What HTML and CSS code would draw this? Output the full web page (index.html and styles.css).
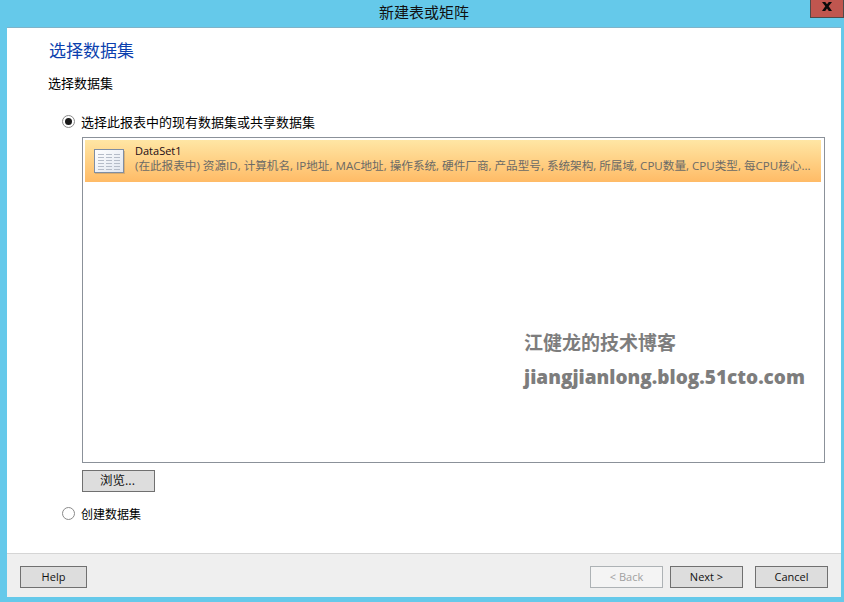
FILE: index.html
```html
<!DOCTYPE html>
<html lang="zh-CN">
<head>
<meta charset="utf-8">
<title>新建表或矩阵</title>
<link rel="stylesheet" href="styles.css">
</head>
<body>
<div class="window">
  <header class="titlebar">
    <span class="title">新建表或矩阵</span>
    <button class="close" type="button" aria-label="关闭">
      <svg width="12" height="9" viewBox="0 0 12 9"><path d="M1 0H4.2L6 2.2 7.8 0H11L7.7 4.2 11 9H7.8L6 6.4 4.2 9H1L4.3 4.2Z" fill="#0b0b0b"/></svg>
    </button>
  </header>
  <div class="client">
    <main class="content">
      <h1 class="heading">选择数据集</h1>
      <p class="subheading">选择数据集</p>
      <label class="option option-first"><span class="radio checked"></span>选择此报表中的现有数据集或共享数据集</label>
      <div class="indent">
        <div class="listbox">
          <div class="item">
            <svg class="item-icon" width="32" height="26" viewBox="0 0 32 26">
              <defs><linearGradient id="sheet" x1="0" y1="0" x2="1" y2="1"><stop offset="0" stop-color="#ffffff"/><stop offset="1" stop-color="#dfe5ef"/></linearGradient></defs>
              <rect x="2" y="3" width="30" height="23" fill="#b9976a" opacity=".55"/>
              <rect x="1.5" y="1.5" width="29" height="23" fill="url(#sheet)" stroke="#7f8ea3"/>
              <path d="M5 6.5h6m2 0h6m2 0h6M5 9.5h6m2 0h6m2 0h6M5 12.5h6m2 0h6m2 0h6M5 15.5h6m2 0h6m2 0h6M5 18.5h6m2 0h6m2 0h6M5 21.5h6m2 0h6m2 0h6" stroke="#b5bcc8" fill="none"/>
            </svg>
            <div class="item-text">
              <div class="item-name">DataSet1</div>
              <div class="item-desc">(在此报表中) 资源ID, 计算机名, IP地址, MAC地址, 操作系统, 硬件厂商, 产品型号, 系统架构, 所属域, CPU数量, CPU类型, 每CPU核心...</div>
            </div>
          </div>
        </div>
        <button class="btn btn-browse" type="button">浏览...</button>
      </div>
      <label class="option option-second"><span class="radio"></span>创建数据集</label>
      <div class="watermark">
        <div class="wm-cn">江健龙的技术博客</div>
        <div class="wm-url">jiangjianlong.blog.51cto.com</div>
      </div>
    </main>
    <footer class="footer">
      <button class="btn" type="button">Help</button>
      <div class="nav">
        <button class="btn btn-disabled" type="button" disabled>&lt; Back</button>
        <button class="btn" type="button">Next &gt;</button>
        <button class="btn btn-cancel" type="button">Cancel</button>
      </div>
    </footer>
  </div>
</div>
</body>
</html>
```
FILE: styles.css
```css
* { box-sizing: border-box; }
html, body { margin: 0; height: 100%; }
body {
  width: 844px;
  height: 602px;
  overflow: hidden;
  font-family: "Open Sans", "Noto Sans CJK SC", sans-serif;
  font-size: 12px;
  color: #000;
}
.window {
  width: 844px;
  height: 602px;
  background: #65c9ea;
  padding: 0 3px 5px 7px;
  display: flex;
  flex-direction: column;
}
.titlebar {
  height: 27px;
  flex: none;
  position: relative;
  display: flex;
  justify-content: center;
  align-items: center;
  margin-right: 4px;
  padding: 0 0 5px 4px;
}
.title {
  font-family: "Noto Sans CJK SC", sans-serif;
  font-size: 15px;
  color: #111;
}
.close {
  position: absolute;
  top: 0;
  right: -7px;
  width: 34px;
  height: 18px;
  padding: 0 0 4px;
  background: #c0564f;
  border: 1px solid #4e4a4a;
  border-top: 0;
  display: flex;
  align-items: center;
  justify-content: center;
}
.client {
  flex: 1;
  display: flex;
  flex-direction: column;
  background: #fff;
  border-top: 1px solid #7fb3c9;
  min-height: 0;
}
.content {
  flex: 1;
  position: relative;
  padding: 0 16px 0 41px;
  min-height: 0;
}
.heading {
  margin: 9px 0 0 1px;
  font-family: "Noto Sans CJK SC", sans-serif;
  font-weight: 400;
  font-size: 17px;
  line-height: 26px;
  color: #0b3fae;
}
.subheading {
  margin: 10px 0 0;
  font-family: "Noto Sans CJK SC", sans-serif;
  font-size: 13px;
  line-height: 19px;
}
.option {
  display: flex;
  align-items: center;
  gap: 6px;
  margin-left: 14px;
  font-family: "Noto Sans CJK SC", sans-serif;
  font-size: 13px;
  line-height: 19px;
}
.option-first { margin-top: 20px; }
.option-second { margin-top: 12px; font-size: 12px; }
.radio {
  width: 13px;
  height: 13px;
  border: 1px solid #8a8a8a;
  border-radius: 50%;
  background: #fff;
  flex: none;
  display: flex;
  align-items: center;
  justify-content: center;
}
.radio.checked::before {
  content: "";
  width: 7px;
  height: 7px;
  border-radius: 50%;
  background: #1a1a1a;
}
.indent {
  margin: 6px 0 0 34px;
}
.listbox {
  width: 743px;
  height: 326px;
  border: 1px solid #8b9199;
  padding: 2px 3px 2px 2px;
  background: #fff;
}
.item {
  height: 42px;
  display: flex;
  align-items: center;
  background: linear-gradient(#ffe6a4, #ffbb66);
  padding-left: 8px;
}
.item-icon { flex: none; }
.item-text { margin-left: 10px; min-width: 0; padding-bottom: 6px; }
.item-name { font-size: 11px; line-height: 15px; color: #1a0a14; }
.item-desc { font-size: 11.6px; line-height: 15px; color: #6b6a66; white-space: nowrap; }
.btn {
  width: 73px;
  height: 22px;
  padding: 0;
  background: #dddddd;
  border: 1px solid #707070;
  border-radius: 0;
  font-family: "Open Sans", "Noto Sans CJK SC", sans-serif;
  font-size: 11px;
  line-height: 18px;
  color: #111;
}
.btn-browse { display: block; margin-top: 7px; padding-right: 2px; font-size: 12.5px; }
.btn-disabled {
  background: #f4f4f4;
  border-color: #adb2b5;
  color: #a0a0a0;
}
.btn-cancel { margin-left: 5px; }
.footer {
  flex: none;
  height: 44px;
  background: #efefef;
  border-top: 1px solid #d5d5d5;
  padding: 12px 13px 0;
  display: flex;
  justify-content: space-between;
  align-items: flex-start;
}
.footer > .btn { width: 67px; }
.nav { display: flex; gap: 7px; }
.watermark {
  position: absolute;
  left: 517px;
  top: 300px;
  color: #7d7d7d;
  font-family: "Noto Sans CJK SC", sans-serif;
  font-weight: 700;
  white-space: nowrap;
}
.wm-cn { font-size: 19px; line-height: 28px; }
.wm-url { font-family: "Open Sans", sans-serif; font-weight: 800; font-size: 19px; line-height: 28px; margin-top: 7px; }
```
